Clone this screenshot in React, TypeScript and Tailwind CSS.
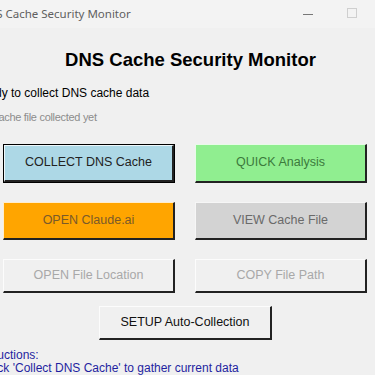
import React from 'react';

const font = { fontFamily: '"Liberation Sans", Arial, sans-serif' };

type BtnProps = {
    label: string;
    bg: string;
    text: string;
    focused?: boolean;
    className?: string;
};

const TkButton = ({ label, bg, text, focused, className = '' }: BtnProps) => (
    <div className={`${focused ? 'border border-black' : ''} ${className}`}>
        <div
            className={`h-full w-full flex items-center justify-center border-t border-l border-t-white/80 border-l-white/80 border-b-2 border-r-2 border-b-[#222] border-r-[#222] ${bg} ${text} text-[12.5px]`}
        >
            {label}
        </div>
    </div>
);

export default function App() {
    return (
        <div className="w-[375px] h-[375px] overflow-hidden bg-[#f0f0f0] flex flex-col" style={font}>
            {/* title bar */}
            <div className="h-[28px] bg-[#f3f3f3] flex items-center shrink-0">
                <span
                    className="ml-[-21px] text-[11.5px] text-[#5f5f5f] flex-1"
                    style={{ fontFamily: '"Noto Sans", "Open Sans", sans-serif' }}
                >
                    DNS Cache Security Monitor
                </span>
                <div className="w-[10px] h-px bg-[#777] mr-[34px]" />
                <div className="w-[10px] h-[10px] border border-[#cfcfcf] mr-[18px] mb-[2px]" />
            </div>

            {/* heading */}
            <h1 className="mt-[23px] ml-[6px] text-center text-[18.5px] font-bold text-black leading-none">
                DNS Cache Security Monitor
            </h1>

            <p className="mt-[17px] ml-[-27px] text-[12px] text-black leading-none">
                Ready to collect DNS cache data
            </p>
            <p className="mt-[13px] ml-[-23px] text-[11px] text-[#8c8c8c] leading-none tracking-[-0.3px]">
                No cache file collected yet
            </p>

            {/* button grid */}
            <div className="mt-[21px] ml-[3px] w-[364px] grid grid-cols-2 gap-x-[20px] gap-y-[19px]">
                <TkButton label="COLLECT DNS Cache" bg="bg-[#add8e6]" text="text-[#222]" focused className="h-[39px]" />
                <TkButton label="QUICK Analysis" bg="bg-[#90ee90]" text="text-[#3c7a3c]" className="h-[39px]" />
                <TkButton label="OPEN Claude.ai" bg="bg-[#ffa500]" text="text-[#7a5a2a]" className="h-[38px]" />
                <TkButton label="VIEW Cache File" bg="bg-[#d3d3d3]" text="text-[#6a6a6a]" className="h-[38px]" />
                <TkButton label="OPEN File Location" bg="bg-[#f0f0f0]" text="text-[#a8a8a8]" className="h-[34px]" />
                <TkButton label="COPY File Path" bg="bg-[#f0f0f0]" text="text-[#a8a8a8]" className="h-[34px]" />
            </div>

            <div className="mt-[13px] ml-[99px]">
                <TkButton label="SETUP Auto-Collection" bg="bg-[#f0f0f0]" text="text-[#111]" className="h-[34px] w-[173px]" />
            </div>

            {/* instructions */}
            <div className="mt-[9px] text-[12px] leading-[13px] text-[#1f1fa0]">
                <p className="ml-[-26px]">Instructions:</p>
                <p className="ml-[-30px]">1. Click 'Collect DNS Cache' to gather current data</p>
            </div>
            <div className="mt-[1px] h-[4px] border-t-2 border-[#222] bg-[#3a2f20]" />
        </div>
    );
}
